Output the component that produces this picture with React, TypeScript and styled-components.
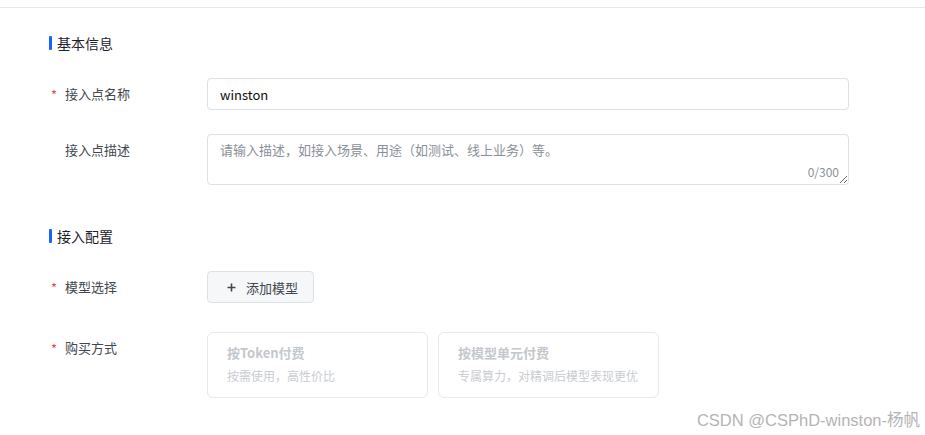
import React from "react";
import styled, { createGlobalStyle } from "styled-components";

const Global = createGlobalStyle`
  html, body { margin: 0; padding: 0; background: #ffffff; }
  body { font-family: "Noto Sans CJK SC", "Noto Sans", sans-serif; color: #1d2129; }
  * { box-sizing: border-box; }
`;

const Page = styled.div`
  width: 925px;
  height: 435px;
  position: relative;
  overflow: hidden;
  background: #fff;
`;

const TopStrip = styled.div`
  height: 8px;
  border-bottom: 1px solid #e8eaed;
`;

const Form = styled.div`
  display: flex;
  flex-direction: column;
  padding-left: 49px;
`;

const SectionTitle = styled.div<{ $top: number }>`
  display: flex;
  align-items: center;
  gap: 5px;
  margin-top: ${(p) => p.$top}px;
  height: 20px;
  font-size: 14px;
  font-weight: 400;
  color: #1d2129;
  &::before {
    content: "";
    width: 3px;
    height: 14px;
    background: #1664ff;
    border-radius: 1px;
  }
`;

const Row = styled.div<{ $top: number }>`
  display: flex;
  align-items: flex-start;
  margin-top: ${(p) => p.$top}px;
`;

const Label = styled.div<{ $required?: boolean }>`
  width: 158px;
  flex: none;
  display: flex;
  align-items: center;
  height: 31px;
  font-size: 13px;
  color: #42464e;
  padding-left: 16px;
  position: relative;
  &::before {
    content: ${(p) => (p.$required ? '"*"' : '""')};
    position: absolute;
    left: 2px;
    top: 10px;
    font-size: 13px;
    line-height: 13px;
    color: #e5484d;
  }
`;

const Input = styled.input`
  width: 642px;
  height: 32px;
  border: 1px solid #dde0e6;
  border-radius: 4px;
  padding: 0 12px;
  font-family: "Noto Sans CJK SC", "Noto Sans", sans-serif;
  font-size: 13px;
  color: #0c0d0e;
  outline: none;
  background: #fff;
`;

const AreaWrap = styled.div`
  position: relative;
  width: 642px;
  height: 51px;
`;

const Area = styled.textarea`
  width: 642px;
  height: 51px;
  border: 1px solid #dde0e6;
  border-radius: 4px;
  padding: 5px 12px;
  font-family: "Noto Sans CJK SC", "Noto Sans", sans-serif;
  font-size: 13px;
  line-height: 20px;
  color: #0c0d0e;
  resize: vertical;
  outline: none;
  display: block;
  &::placeholder {
    color: #8a9099;
  }
`;

const Counter = styled.span`
  position: absolute;
  right: 10px;
  bottom: 5px;
  font-size: 12px;
  line-height: 16px;
  color: #8a9099;
`;

const AddButton = styled.button`
  height: 32px;
  width: 107px;
  display: flex;
  align-items: center;
  gap: 10px;
  padding: 0 0 0 19px;
  border: 1px solid #dde0e6;
  border-radius: 4px;
  background: #f6f7f9;
  font-family: "Noto Sans CJK SC", "Noto Sans", sans-serif;
  font-size: 13px;
  color: #42464e;
  cursor: pointer;
`;

const Cards = styled.div`
  display: flex;
  gap: 10px;
`;

const Card = styled.div`
  width: 221px;
  height: 66px;
  border: 1px solid #e6e8eb;
  border-radius: 6px;
  padding: 10px 0 0 19px;
  display: flex;
  flex-direction: column;
  gap: 3px;
`;

const CardTitle = styled.div`
  font-size: 13px;
  font-weight: 700;
  line-height: 20px;
  color: #c4c7cc;
`;

const CardSub = styled.div`
  font-size: 12px;
  line-height: 20px;
  color: #c9ccd1;
`;

const Watermark = styled.div`
  position: absolute;
  right: 5px;
  bottom: 5px;
  font-family: "Liberation Sans", "Noto Sans CJK SC", sans-serif;
  font-size: 16.5px;
  line-height: 20px;
  color: #b4b4b4;
`;

const Plus = () => (
  <svg width="9" height="9" viewBox="0 0 9 9">
    <path d="M4.5 0.5v8M0.5 4.5h8" stroke="#42464e" strokeWidth="1.6" />
  </svg>
);

export default function App() {
  return (
    <Page>
      <Global />
      <TopStrip />
      <Form>
        <SectionTitle $top={25}>基本信息</SectionTitle>
        <Row $top={25}>
          <Label $required>接入点名称</Label>
          <Input defaultValue="winston" />
        </Row>
        <Row $top={24}>
          <Label>接入点描述</Label>
          <AreaWrap>
            <Area placeholder="请输入描述，如接入场景、用途（如测试、线上业务）等。" />
            <Counter>0/300</Counter>
          </AreaWrap>
        </Row>
        <SectionTitle $top={41}>接入配置</SectionTitle>
        <Row $top={25}>
          <Label $required>模型选择</Label>
          <AddButton>
            <Plus />
            添加模型
          </AddButton>
        </Row>
        <Row $top={29}>
          <Label $required>购买方式</Label>
          <Cards>
            <Card>
              <CardTitle>按Token付费</CardTitle>
              <CardSub>按需使用，高性价比</CardSub>
            </Card>
            <Card>
              <CardTitle>按模型单元付费</CardTitle>
              <CardSub>专属算力，对精调后模型表现更优</CardSub>
            </Card>
          </Cards>
        </Row>
      </Form>
      <Watermark>CSDN @CSPhD-winston-杨帆</Watermark>
    </Page>
  );
}
